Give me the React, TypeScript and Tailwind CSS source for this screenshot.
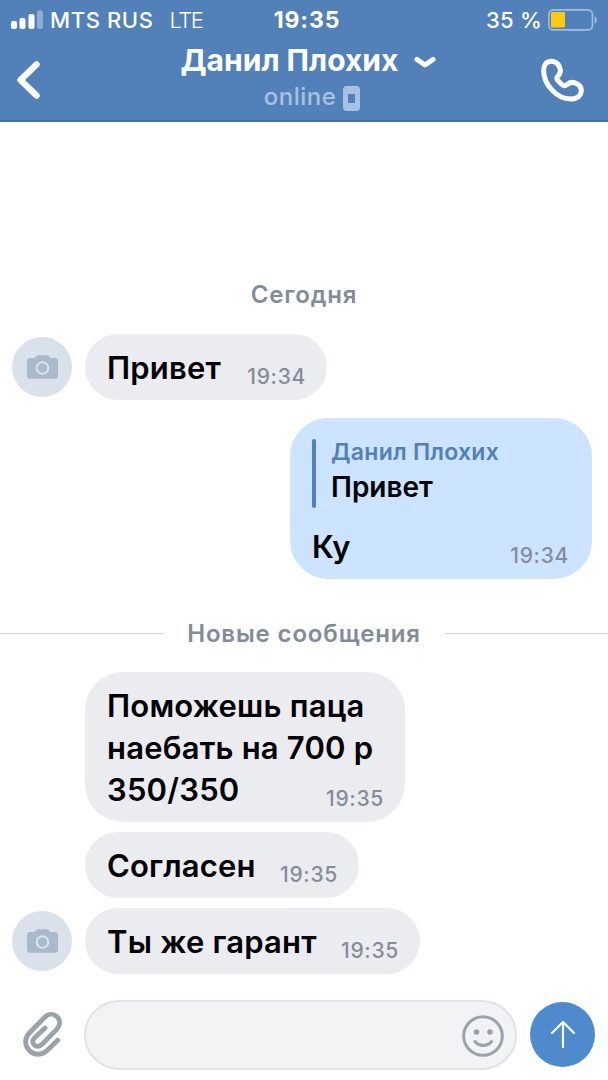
import React from 'react';
import clsx from 'clsx';

type Message = {
  id: number;
  lines: string[];
  time: string;
  width: string;
  showAvatar: boolean;
};

const NEW_MESSAGES: Message[] = [
  { id: 2, lines: ['Поможешь паца', 'наебать на 700 р', '350/350'], time: '19:35', width: 'w-[320px]', showAvatar: false },
  { id: 3, lines: ['Согласен'], time: '19:35', width: 'w-[274px]', showAvatar: false },
  { id: 4, lines: ['Ты же гарант'], time: '19:35', width: 'w-[335px]', showAvatar: true },
];

function StatusBar() {
  return (
    <div className="grid h-10 grid-cols-[1fr_auto_1fr] items-center pl-[11px] pr-[10px] text-[22px] leading-none">
      <div className="flex items-center">
        <svg width="33" height="20" viewBox="0 0 33 20" fill="#fff">
          <rect x="0" y="11" width="6" height="8" rx="2" />
          <rect x="8.5" y="8" width="6" height="11" rx="2" />
          <rect x="17.5" y="4" width="6" height="15" rx="2" />
          <rect x="26" y="0.5" width="6" height="18.5" rx="2" opacity="0.35" />
        </svg>
        <span className="ml-[6px] font-medium tracking-[0.6px]">MTS RUS</span>
        <span className="ml-4 font-light tracking-[-1.5px]">LTE</span>
      </div>
      <span className="ml-[5px] text-[23px] font-bold tracking-[0.9px]">19:35</span>
      <div className="flex items-center justify-end">
        <span className="font-medium tracking-[0.2px]">35 %</span>
        <svg className="ml-[6px]" width="50" height="22" viewBox="0 0 50 22" fill="none">
          <rect x="0.9" y="0.9" width="43.5" height="20" rx="4.5" stroke="#a3bddd" strokeWidth="1.6" />
          <rect x="3" y="3" width="14" height="15.5" rx="1" fill="#fecb0b" />
          <path d="M46.5 7.5c3 1 3 6 0 7z" fill="#a3bddd" />
        </svg>
      </div>
    </div>
  );
}

function Header() {
  return (
    <header className="h-[122px] border-b-2 border-[#426fa6] bg-[#5181b8] text-white">
      <StatusBar />
      <div className="flex h-20 justify-between pl-4 pr-[22px]">
        <svg className="mt-5" width="26" height="40" viewBox="0 0 26 40" fill="none">
          <path d="M20.5 4.5 4.5 20l16 15.5" stroke="#fff" strokeWidth="6.4" strokeLinecap="round" strokeLinejoin="round" />
        </svg>
        <div className="ml-[35px] flex flex-col items-center">
          <div className="flex h-10 items-center">
            <h1 className="text-[30px] font-bold leading-none">Данил Плохих</h1>
            <svg className="ml-4 mt-[6px]" width="22" height="14" viewBox="0 0 22 14" fill="none">
              <path d="M3 3.5 11 9l8-5.5" stroke="#fff" strokeWidth="5" strokeLinecap="round" strokeLinejoin="round" />
            </svg>
          </div>
          <div className="flex items-center pl-[7px] text-[#a8c1e2]">
            <span className="text-2xl font-medium leading-[34px] tracking-[0.5px]">online</span>
            <svg className="ml-[7px] mt-[2px]" width="17" height="25" viewBox="0 0 17 25">
              <rect width="17" height="25" rx="4" fill="#a8c1e2" />
              <rect x="5" y="8" width="7" height="9" fill="#5181b8" />
            </svg>
          </div>
        </div>
        <svg className="mt-[17px]" width="46" height="46" viewBox="708 171 138 138" fill="none">
          <path
            d="M742 184C726 184 719 196 719 212C719 252 758 297 800 297C820 297 832 286 832 270C832 262 827 256 820 252C808 245 797 246 789 254C783 259 777 258 772 252L763 243C757 237 757 232 763 227C770 219 771 210 766 200C761 189 752 184 742 184Z"
            stroke="#fff"
            strokeWidth="15"
            strokeLinejoin="round"
          />
        </svg>
      </div>
    </header>
  );
}

function Avatar() {
  return (
    <div className="flex size-[60px] items-center justify-center rounded-full bg-[#d9e2ea]">
      <svg width="31" height="24" viewBox="0 0 31 24" fill="none">
        <path d="M3 3h4.500l1.600-1.800Q10 .2 11.400.2h8.200q1.400 0 2.300 1L23.500 3H28q3 0 3 3v15q0 2.800-3 2.800H3Q0 23.800 0 21V6q0-3 3-3Z" fill="#a9bacb" />
        <circle cx="15.500" cy="13" r="5.800" stroke="#dce5ed" strokeWidth="2" />
      </svg>
    </div>
  );
}

function Time({ value }: { value: string }) {
  return <span className="text-[21px] font-medium leading-6 tracking-[0.7px] text-[#848d99]">{value}</span>;
}

function IncomingMessage({ message }: { message: Message }) {
  return (
    <div className="flex items-end gap-[13px] pl-3">
      <div className="flex h-[66px] w-[60px] shrink-0 items-center">{message.showAvatar && <Avatar />}</div>
      <div
        className={clsx(
          'flex items-end justify-between bg-[#ebecf0] pb-[11px] pl-[22px] pr-[21px] pt-[13px]',
          message.lines.length > 1 ? 'rounded-[38px]' : 'rounded-[33px]',
          message.width
        )}
      >
        <div className="text-[31px] font-semibold leading-[42px] tracking-[0.2px] text-black">
          {message.lines.map((line) => (
            <p key={line} className="w-0 whitespace-nowrap">{line}</p>
          ))}
        </div>
        <Time value={message.time} />
      </div>
    </div>
  );
}

function Composer() {
  return (
    <footer className="mt-[26px] flex items-center pl-[22px] pr-[13px]">
      <svg className="mb-[3px] shrink-0" width="42" height="46" viewBox="66 61 126 138" fill="none">
        <path
          d="M173 149L142 179C126 195 103 194 89 180C73 165 73 143 88 127L132 82C144 69 160 68 171 78C182 89 181 104 170 116L127 160C119 168 109 169 103 163C96 157 97 148 104 141L135 112"
          stroke="#99a2ad"
          strokeWidth="14.500"
          strokeLinecap="round"
          strokeLinejoin="round"
        />
      </svg>
      <div className="ml-5 flex h-[70px] w-[433px] items-center justify-end rounded-full border-2 border-[#e1e3e6] bg-[#f2f3f5] pr-[10px]">
        <svg className="mt-[2px]" width="44" height="44" viewBox="0 0 44 44" fill="none" stroke="#99a2ad" strokeWidth="3" strokeLinecap="round">
          <circle cx="22" cy="22" r="19.300" />
          <circle cx="15.500" cy="18" r="2.800" fill="#99a2ad" stroke="none" />
          <circle cx="29" cy="18" r="2.800" fill="#99a2ad" stroke="none" />
          <path d="M14 27.500c4 5.200 12.500 5.200 16.500 0" />
        </svg>
      </div>
      <button type="button" className="mb-[2px] ml-[13px] flex size-[65px] items-center justify-center rounded-full bg-[#4f8bcc]">
        <svg width="26" height="28" viewBox="0 0 26 28" fill="none" stroke="#fff" strokeWidth="2.200" strokeLinecap="round" strokeLinejoin="round">
          <path d="M13 27V2M2 13 13 2l11 11" />
        </svg>
      </button>
    </footer>
  );
}

export default function App() {
  return (
    <main className="h-[1080px] w-[608px] overflow-hidden bg-white font-['Inter',sans-serif]">
      <Header />

      <p className="mt-[157px] h-8 text-center text-2xl font-semibold leading-8 tracking-[0.85px] text-[#818c99]">Сегодня</p>

      <div className="mt-[23px]">
        <IncomingMessage message={{ id: 0, lines: ['Привет'], time: '19:34', width: 'w-[242px]', showAvatar: true }} />
      </div>

      <div className="ml-auto mr-4 mt-[18px] flex h-[161px] w-[302px] flex-col rounded-[38px] bg-[#cce4ff] pl-[22px] pr-[23px] pt-[21px]">
        <div className="flex h-[69px]">
          <div className="h-full w-1 rounded-full bg-[#5181b8]" />
          <div className="ml-[15px]">
            <p className="text-[23px] font-semibold leading-[27px] tracking-[0.25px] text-[#5181b8]">Данил Плохих</p>
            <p className="text-[28px] font-semibold leading-[42px] text-black">Привет</p>
          </div>
        </div>
        <div className="mt-[18px] flex items-end justify-between">
          <p className="text-[31px] font-semibold leading-[42px] tracking-[-0.2px] text-black">Ку</p>
          <Time value="19:34" />
        </div>
      </div>

      <div className="mt-[38px] flex h-8 items-center">
        <div className="h-px flex-1 bg-[#d0d2d6]" />
        <p className="w-[281px] whitespace-nowrap pt-px text-center text-2xl font-semibold leading-8 tracking-[0.85px] text-[#818c99]">Новые сообщения</p>
        <div className="h-px flex-1 bg-[#d0d2d6]" />
      </div>

      <div className="mt-[23px] flex flex-col gap-[10px]">
        {NEW_MESSAGES.map((message) => (
          <IncomingMessage key={message.id} message={message} />
        ))}
      </div>

      <Composer />
    </main>
  );
}
